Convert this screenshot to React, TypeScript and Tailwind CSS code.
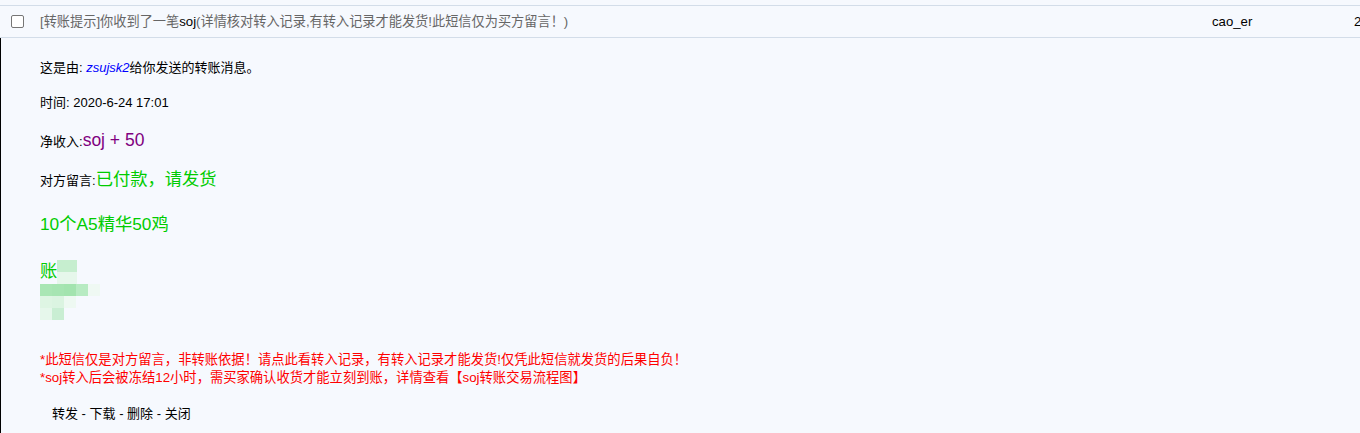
import React from "react";

const font = { fontFamily: '"Liberation Sans", Arial, "Noto Sans CJK SC", sans-serif' };

// blurred account area, drawn as 12px cells
const mosaic: string[][] = [
  ["#a9e6b4", "#a6e5b2", "#a3e4af", "#b7ebc2", "#eff9f3"],
  ["#def5e3", "#dbf4e1", "#eef9f2"],
  ["#e6f7eb", "#c9eed3"],
];

export default function App() {
  return (
    <div className="w-full h-[433px] overflow-hidden bg-[#f6f9fe] text-[#333]" style={font}>
      <div className="h-[5px]" />
      {/* message row */}
      <div className="flex items-center h-[33px] border-y border-[#d3dde9] text-[13.2px] whitespace-nowrap">
        <div className="w-[40px] shrink-0 flex pl-[11px]">
          <div className="w-[13px] h-[13px] border border-[#767676] rounded-[2px] bg-white" />
        </div>
        <div className="w-[1172px] shrink-0 text-[#666]">
          [转账提示]你收到了一笔<span className="text-black">soj</span>(详情核对转入记录,有转入记录才能发货!此短信仅为买方留言！)
        </div>
        <div className="w-[142px] shrink-0 text-black">cao_er</div>
        <div className="shrink-0 text-black">2020-6-24 17:01</div>
      </div>

      {/* detail */}
      <div className="border-l border-black h-full pl-[39px] pt-[20px] text-[13px] text-black">
        <div className="h-[20px] leading-[20px]">
          这是由: <span className="text-[#0000ff] italic">zsujsk2</span>给你发送的转账消息。
        </div>
        <div className="h-[20px] leading-[20px] mt-[15px]">时间: 2020-6-24 17:01</div>
        <div className="h-[24px] leading-[24px] mt-[15px]">
          净收入:<span className="text-[17.5px] text-[#800080]">soj + 50</span>
        </div>
        <div className="h-[24px] leading-[24px] mt-[15px]">
          对方留言:<span className="text-[17.3px] text-[#00cc00]">已付款，请发货</span>
        </div>
        <div className="h-[24px] leading-[24px] mt-[21px] text-[17.3px] text-[#00cc00]">10个A5精华50鸡</div>
        <div className="mt-[24px] flex flex-col">
          <div className="flex h-[24px]">
            <span className="text-[17.3px] leading-[24px] text-[#00cc00] w-[17px] -mt-[1px]">账</span>
            <div className="flex flex-col">
              <div className="w-[20px] h-[12px] bg-[#c6eecf]" />
              <div className="w-[20px] h-[12px] bg-[#e6f7eb]" />
            </div>
          </div>
          {mosaic.map((row, i) => (
            <div key={i} className="flex">
              {row.map((c, j) => (
                <div key={j} className="w-[12px] h-[12px]" style={{ background: c }} />
              ))}
            </div>
          ))}
        </div>
        <div className="mt-[31px] text-[13.3px] leading-[18px] text-[#ff0000] whitespace-nowrap">
          <div>*此短信仅是对方留言，非转账依据！请点此看转入记录，有转入记录才能发货!仅凭此短信就发货的后果自负！</div>
          <div>*soj转入后会被冻结12小时，需买家确认收货才能立刻到账，详情查看【soj转账交易流程图】</div>
        </div>
        <div className="mt-[17px] pl-[12px] leading-[20px]">转发 - 下载 - 删除 - 关闭</div>
      </div>
    </div>
  );
}
